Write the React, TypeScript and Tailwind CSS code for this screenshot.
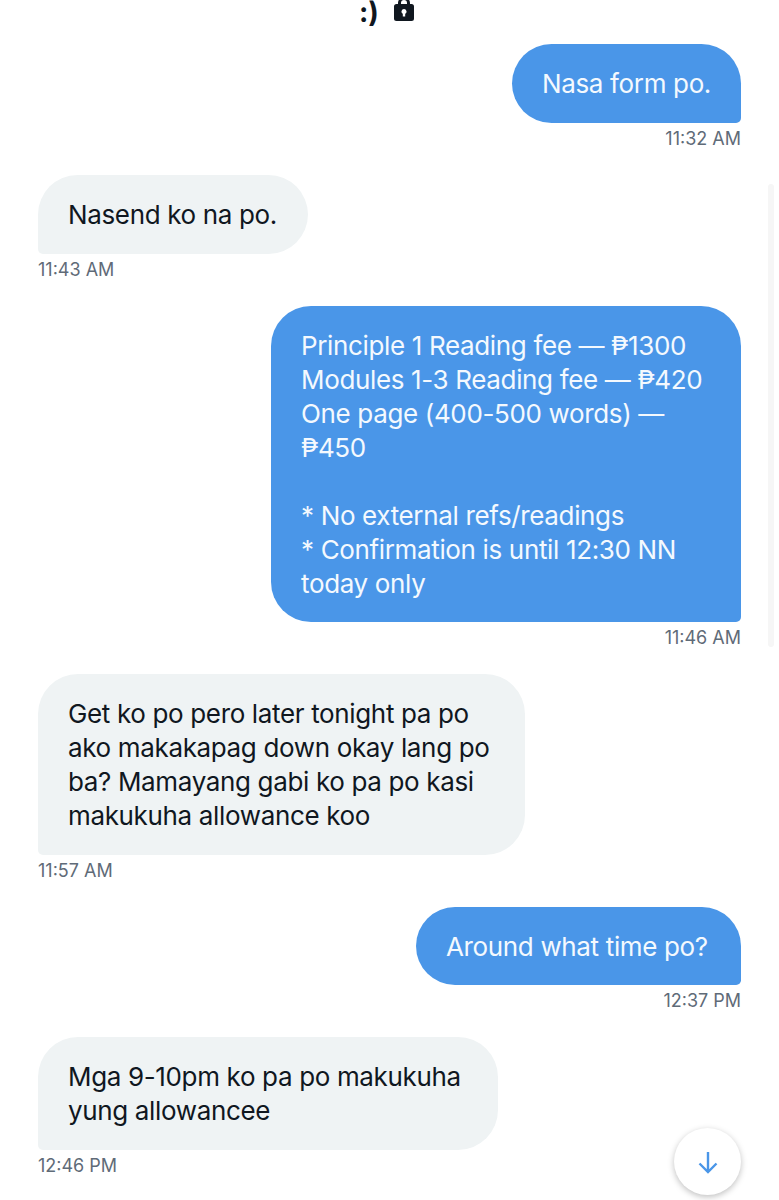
import React from "react";

const font = { fontFamily: "Inter, 'Noto Sans', sans-serif" };

function Msg({ side, time, children, mt, w, py = "py-[22.5px]" }: { side: "l" | "r"; time: string; children: React.ReactNode; mt: string; w: string; py?: string }) {
  const r = side === "r";
  return (
    <div className={`flex flex-col ${r ? "items-end" : "items-start"} ${mt}`}>
      <div
        className={
          (r
            ? "bg-[#4a96e8] text-[#f4f9fe] rounded-[40px] rounded-br-[5px] "
            : "bg-[#eff3f4] text-[#10171f] rounded-[40px] rounded-bl-[5px] ") +
          "pl-[30px] text-[26px] leading-[34px] tracking-[-0.35px] whitespace-nowrap " +
          py +
          " " +
          w
        }
      >
        {children}
      </div>
      <div className="mt-[4px] text-[18px] leading-[24px] text-[#5f6b78]">{time}</div>
    </div>
  );
}

export default function App() {
  return (
    <div style={font} className="relative w-[779px] h-[1200px] overflow-hidden bg-white">
      <div className="absolute left-[768px] top-[184px] w-[6px] h-[463px] rounded-full bg-[#f6f6f6]" />
      <div className="h-[44px] relative">
        <div className="absolute left-[359px] top-0 flex items-start gap-[13px]">
          <span className="text-[28px] leading-[24px] font-bold text-[#10171f]">:)</span>
          <svg width="24" height="24" viewBox="0 0 24 24">
            <path
              fill="#10171f"
              fillRule="evenodd"
              d="M6 4V3a6 6 0 0 1 12 0v1h1.500A2.500 2.500 0 0 1 22 6.500v12A2.500 2.500 0 0 1 19.500 21h-15A2.500 2.500 0 0 1 2 18.500v-12A2.500 2.500 0 0 1 4.500 4zM9 4h6V3a3 3 0 0 0-6 0zm3 5a2.500 2.500 0 0 0-1.200 4.700V16.500h2.400v-2.800A2.500 2.500 0 0 0 12 9z"
            />
          </svg>
        </div>
      </div>
      <div className="pl-[38px] pr-[38px]">
        <Msg side="r" time="11:32 AM" mt="mt-0" w="w-[229px]">Nasa form po.</Msg>
        <Msg side="l" time="11:43 AM" mt="mt-[24px]" w="w-[270px]">Nasend ko na po.</Msg>
        <Msg side="r" time="11:46 AM" mt="mt-[24px]" w="w-[470px]" py="pt-[22.5px] pb-[21.5px]">
          Principle 1 Reading fee — ₱1300
          <br />
          Modules 1-3 Reading fee — ₱420
          <br />
          One page (400-500 words) —
          <br />
          ₱450
          <br />
          <br />
          * No external refs/readings
          <br />
          * Confirmation is until 12:30 NN
          <br />
          today only
        </Msg>
        <Msg side="l" time="11:57 AM" mt="mt-[24px]" w="w-[487px]">
          Get ko po pero later tonight pa po
          <br />
          ako makakapag down okay lang po
          <br />
          ba? Mamayang gabi ko pa po kasi
          <br />
          makukuha allowance koo
        </Msg>
        <Msg side="r" time="12:37 PM" mt="mt-[24px]" w="w-[325px]" py="pt-[22.5px] pb-[21.5px]">Around what time po?</Msg>
        <Msg side="l" time="12:46 PM" mt="mt-[24px]" w="w-[460px]">
          Mga 9-10pm ko pa po makukuha
          <br />
          yung allowancee
        </Msg>
      </div>
      <div className="absolute left-[674px] top-[1128px] w-[67px] h-[67px] rounded-full bg-white shadow-[0_2px_6px_rgba(0,0,0,0.25)] flex items-center justify-center">
        <svg width="26" height="26" viewBox="0 0 26 26" fill="none" stroke="#4a96e8" strokeWidth="2.400">
          <path d="M13 3v20M4.500 14.500 13 23l8.500-8.500" />
        </svg>
      </div>
    </div>
  );
}
